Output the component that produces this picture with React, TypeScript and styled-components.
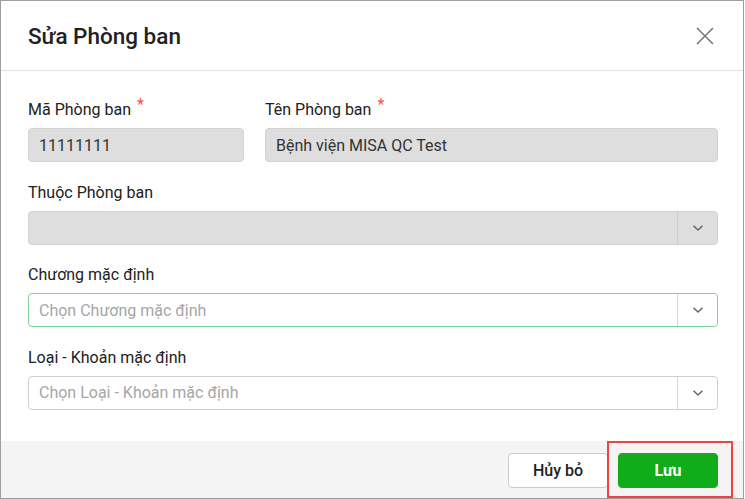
import React from "react";
import styled, { createGlobalStyle } from "styled-components";

const Global = createGlobalStyle`
  html, body { margin: 0; padding: 0; background: #ffffff; }
  body { font-family: Roboto, "Noto Sans", Arial, sans-serif; }
  * { box-sizing: border-box; }
`;

const Dialog = styled.div`
  width: 744px;
  height: 499px;
  border: 1px solid #9e9e9e;
  background: #ffffff;
  display: flex;
  flex-direction: column;
`;

const Header = styled.div`
  height: 70px;
  flex: none;
  display: flex;
  align-items: center;
  justify-content: space-between;
  padding: 0 26px 0 27px;
  border-bottom: 1px solid #e0e0e0;
`;

const Title = styled.h1`
  margin: 0;
  font-size: 22.5px;
  font-weight: 500;
  color: #212121;
  line-height: 26px;
  padding-top: 1px;
`;

const CloseButton = styled.button`
  width: 24px;
  height: 24px;
  padding: 0;
  border: none;
  background: transparent;
  display: flex;
  align-items: center;
  justify-content: center;
  cursor: pointer;
`;

const Body = styled.div`
  flex: 1;
  padding: 29px 25px 0 27px;
  display: flex;
  flex-direction: column;
`;

const Row = styled.div`
  display: grid;
  grid-template-columns: 216px 1fr;
  column-gap: 21px;
`;

const Field = styled.div`
  display: flex;
  flex-direction: column;
  margin-bottom: 20.67px;
`;

const Label = styled.label`
  font-size: 16px;
  line-height: 20px;
  height: 20px;
  color: #212121;
  margin-bottom: 8px;
  white-space: nowrap;
`;

const Required = styled.span`
  color: #f55252;
  font-size: 16px;
  position: relative;
  top: -5px;
  margin-left: 6px;
`;

const TextBox = styled.div<{ $disabled?: boolean; $focused?: boolean }>`
  height: 34px;
  border: 1px solid ${(p) => (p.$focused ? "#7fd59a" : p.$disabled ? "#d2d2d2" : "#cfcfcf")};
  border-radius: 4px;
  background: ${(p) => (p.$disabled ? "#dedede" : "#ffffff")};
  display: flex;
  align-items: stretch;
  overflow: hidden;
`;

const Value = styled.div<{ $placeholder?: boolean }>`
  flex: 1;
  display: flex;
  align-items: center;
  padding-left: 10px;
  font-size: 16px;
  color: ${(p) => (p.$placeholder ? "#a6a6a6" : "#333333")};
  white-space: nowrap;
`;

const DropButton = styled.div<{ $disabled?: boolean }>`
  width: 40px;
  flex: none;
  border-left: 1px solid ${(p) => (p.$disabled ? "#cccccc" : "#d6d6d6")};
  display: flex;
  align-items: center;
  justify-content: center;
`;

const Footer = styled.div`
  height: 57px;
  flex: none;
  background: #f4f4f4;
  display: flex;
  align-items: flex-start;
  justify-content: flex-end;
  gap: 10px;
  padding: 12px 25px 0 0;
  position: relative;
`;

const Button = styled.button<{ $primary?: boolean }>`
  width: 100px;
  height: 35px;
  border-radius: 4px;
  font-family: Roboto, "Noto Sans", Arial, sans-serif;
  font-size: 16px;
  font-weight: ${(p) => (p.$primary ? 700 : 500)};
  border: 1px solid ${(p) => (p.$primary ? "#10ac1a" : "#cccccc")};
  background: ${(p) => (p.$primary ? "#10ac1a" : "#ffffff")};
  color: ${(p) => (p.$primary ? "#ffffff" : "#212121")};
  cursor: pointer;
`;

const Highlight = styled.div`
  position: absolute;
  left: 606px;
  top: 0;
  width: 126px;
  height: 57px;
  border: 2px solid #f04444;
  pointer-events: none;
`;

const Chevron = () => (
  <svg width="12" height="8" viewBox="0 0 12 8" fill="none">
    <path d="M1.5 1.8 L6 6 L10.5 1.8" stroke="#666" strokeWidth="1.5" />
  </svg>
);

const CloseIcon = () => (
  <svg width="18" height="18" viewBox="0 0 18 18" fill="none">
    <path d="M1 1 L17 17 M17 1 L1 17" stroke="#777" strokeWidth="1.6" />
  </svg>
);

type SelectProps = { value?: string; placeholder?: string; disabled?: boolean; focused?: boolean };

const Select = ({ value, placeholder, disabled, focused }: SelectProps) => (
  <TextBox $disabled={disabled} $focused={focused}>
    <Value $placeholder={!value}>{value || placeholder}</Value>
    <DropButton $disabled={disabled}>
      <Chevron />
    </DropButton>
  </TextBox>
);

export default function App() {
  return (
    <>
      <Global />
      <Dialog>
        <Header>
          <Title>Sửa Phòng ban</Title>
          <CloseButton aria-label="Đóng">
            <CloseIcon />
          </CloseButton>
        </Header>
        <Body>
          <Row>
            <Field>
              <Label>
                Mã Phòng ban<Required>*</Required>
              </Label>
              <TextBox $disabled>
                <Value>11111111</Value>
              </TextBox>
            </Field>
            <Field>
              <Label>
                Tên Phòng ban<Required>*</Required>
              </Label>
              <TextBox $disabled>
                <Value>Bệnh viện MISA QC Test</Value>
              </TextBox>
            </Field>
          </Row>
          <Field>
            <Label>Thuộc Phòng ban</Label>
            <Select disabled />
          </Field>
          <Field>
            <Label>Chương mặc định</Label>
            <Select focused placeholder="Chọn Chương mặc định" />
          </Field>
          <Field>
            <Label>Loại - Khoản mặc định</Label>
            <Select placeholder="Chọn Loại - Khoản mặc định" />
          </Field>
        </Body>
        <Footer>
          <Button>Hủy bỏ</Button>
          <Button $primary>Lưu</Button>
          <Highlight />
        </Footer>
      </Dialog>
    </>
  );
}
